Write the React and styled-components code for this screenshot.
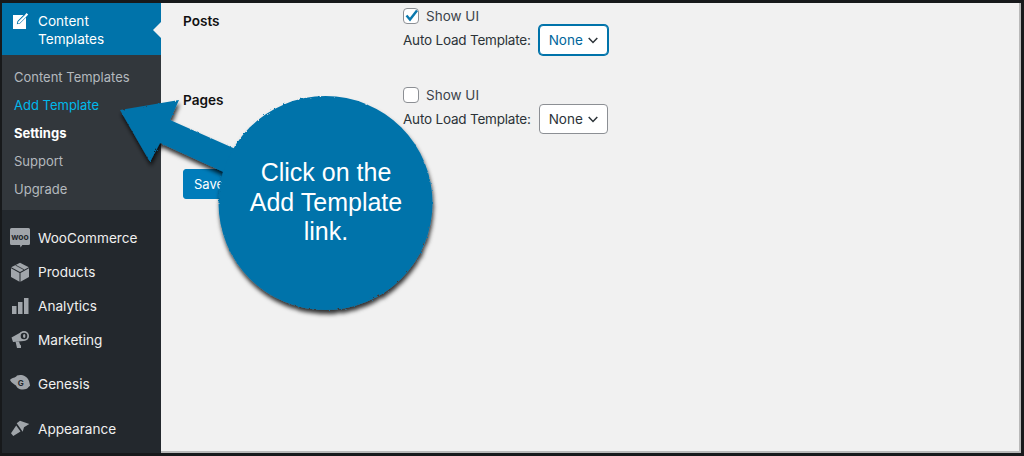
import React from "react";
import styled, { createGlobalStyle } from "styled-components";

const GlobalStyle = createGlobalStyle`
  html, body { margin: 0; padding: 0; background: #f1f1f1; }
  * { box-sizing: border-box; }
`,

  Frame = styled.div`
    position: relative;
    display: flex;
    width: 1024px;
    height: 456px;
    overflow: hidden;
    border: solid #17191b;
    border-width: 3px 3px 3px 2px;
    font-family: Inter, "Liberation Sans", sans-serif;
    font-size: 14px;
    color: #1d2327;
  `,

  Sidebar = styled.nav`
    flex: 0 0 159px;
    background: #23282d;
    display: flex;
    flex-direction: column;
  `,

  ActiveItem = styled.div`
    position: relative;
    display: flex;
    height: 52px;
    padding: 9px 0 0 8px;
    background: #0073aa;
    color: #fff;
    font-size: 13.6px;
    line-height: 18px;
    gap: 8px;

    &::after {
      content: "";
      position: absolute;
      right: 0;
      top: 19px;
      border: 8px solid transparent;
      border-right-color: #f1f1f1;
    }
  `,

  SubMenu = styled.ul`
    list-style: none;
    margin: 0;
    padding: 8px 0 7px 12px;
    background: #32373c;
  `,

  SubItem = styled.li`
    height: 28px;
    line-height: 28px;
    font-size: 13px;
    font-weight: ${p => (p.$current ? 700 : 400)};
    color: ${p => (p.$current ? "#fff" : p.$hover ? "#00b9eb" : "#b4b9be")};
  `,

  MenuList = styled.div`
    display: flex;
    flex-direction: column;
    padding-top: 11px;
  `,

  MenuItem = styled.div`
    display: flex;
    align-items: center;
    height: 34px;
    margin-top: ${p => p.$gap || 0}px;
    padding-left: 8px;
    gap: 8px;
    font-size: 13.6px;
    color: #f0f0f0;
  `,

  IconBox = styled.svg`
    flex: 0 0 20px;
    width: 20px;
    height: 20px;
    overflow: visible;
    fill: ${p => p.$fill || "#a0a5aa"};
  `,

  Main = styled.main`
    flex: 1;
    padding: 5px 0 0 22px;
    background: #f1f1f1;
    box-shadow: inset -2px -2px 0 #b9b9b9;
  `,

  Row = styled.section`
    display: grid;
    grid-template-columns: 220px 1fr;
    height: 47px;
    margin-bottom: 32px;
  `,

  RowLabel = styled.div`
    padding-top: 4px;
    line-height: 18px;
    font-size: 13.6px;
    font-weight: 600;
    color: #111;
  `,

  Field = styled.div`
    display: flex;
    flex-direction: column;
    gap: 1px;
    font-size: 13.5px;
  `,

  CheckLine = styled.label`
    display: flex;
    align-items: center;
    height: 16px;
    gap: 7px;
    color: #3c434a;
  `,

  Box = styled.span`
    position: relative;
    width: 16px;
    height: 16px;
    border: 1px solid #8c8f94;
    border-radius: 4px;
    background: #fff;
  `,

  Tick = styled.svg`
    position: absolute;
    left: -1px;
    top: -2px;
    width: 17px;
    height: 17px;
    fill: none;
    stroke: #0a78ad;
    stroke-width: 2.4;
  `,

  SelectLine = styled.div`
    display: flex;
    align-items: center;
    gap: 8px;
    letter-spacing: -0.2px;
    color: #2c3338;
  `,

  FakeSelect = styled.div`
    display: flex;
    align-items: center;
    justify-content: space-between;
    width: 69px;
    height: 30px;
    padding: 0 9px;
    background: #fff;
    border: 1px solid ${p => (p.$focus ? "#0073aa" : "#8c8f94")};
    border-radius: 4px;
    box-shadow: ${p => (p.$focus ? "0 0 0 1px #0073aa" : "none")};
    letter-spacing: 0;
    color: ${p => (p.$focus ? "#00669b" : "#2c3338")};
  `,

  Chevron = styled.svg`
    width: 10px;
    height: 7px;
    fill: none;
    stroke: #2c3338;
    stroke-width: 1.5;
  `,

  SaveButton = styled.button`
    display: block;
    width: 100px;
    height: 30px;
    margin-top: 35px;
    padding: 0 10px;
    border: 1px solid #007cba;
    border-radius: 3px;
    background: #007cba;
    color: #fff;
    text-align: left;
    font: 13px Inter, "Liberation Sans", sans-serif;
  `,

  CalloutArt = styled.svg`
    position: absolute;
    left: -2px;
    top: -3px;
    width: 1024px;
    height: 456px;
    pointer-events: none;
  `,

  CalloutText = styled.div`
    position: absolute;
    left: 216px;
    top: 155px;
    width: 216px;
    font-family: "Liberation Sans", Arial, sans-serif;
    font-size: 25px;
    line-height: 29.5px;
    text-align: center;
    color: #fff;
  `;

const PencilIcon = () => (
  <IconBox viewBox="0 0 20 20" $fill="#fff">
    <path d="M3 3h10.500L7.500 9 6.800 12.200 10 11.500 16 5.500V17H3z" />
    <path d="M14.500 3.500 16.500 1 18.200 2.500 15.500 5.500 9.800 11 7.800 11.500 8.300 9.500z" />
  </IconBox>
);

const WooIcon = () => (
  <IconBox viewBox="0 0 20 20">
    <path d="M1.500 0h17A1.500 1.500 0 0 1 20 1.500v14a1.500 1.500 0 0 1-1.500 1.500h-6.200L10.600 19.500 10 17H1.500A1.500 1.500 0 0 1 0 15.500v-14A1.500 1.500 0 0 1 1.500 0z" />
    <text x="10" y="11.500" textAnchor="middle" fontSize="8.500" fontWeight="700" fill="#23282d" fontFamily="Inter, sans-serif">woo</text>
  </IconBox>
);

const BoxIcon = () => (
  <IconBox viewBox="0 0 20 20">
    <path d="M10 .8 18.800 5.300 10 10 1.200 5.300z" />
    <path d="M1 6.300 9.500 11V19.700L1 15zM19 6.300V15L10.500 19.700V11z" />
    <path d="M5.500 3.100 14 7.700" stroke="#23282d" strokeWidth=".8" fill="none" />
  </IconBox>
);

const BarsIcon = () => (
  <IconBox viewBox="0 0 20 20">
    <path d="M2 10h4.500v8H2zM8 6h4.500v12H8zM14 2h4.500v16H14z" />
  </IconBox>
);

const MegaphoneIcon = () => (
  <IconBox viewBox="0 0 20 20">
    <path d="M1.500 7.500 11 2.200 14 11 3 12z" />
    <path d="M5.500 11.500h3.500l1 3 1 1v2.500H7z" />
    <circle cx="14" cy="6" r="5" />
    <circle cx="14" cy="6" r="3.300" fill="#23282d" />
    <ellipse cx="14.200" cy="6" rx="1.200" ry="2" />
  </IconBox>
);

const GenesisIcon = () => (
  <IconBox viewBox="0 0 20 20">
    <g transform="translate(0 -1.500)">
      <path d="M0 7.500C2.500 4.500 5 6 7 3c4-1.500 10 0 12 5.500 1 3.500 1 4.500 1 5-2 .5-1.500 3.500-7 3.500-4.500 0-6-2-7-4C4 11.500 1.500 10.500 0 7.500z" />
      <circle cx="11" cy="10.500" r="5" fill="#a0a5aa" />
    </g>
    <text x="10.800" y="12" textAnchor="middle" fontSize="8" fontWeight="700" fill="#23282d" fontFamily="Inter, sans-serif">G</text>
  </IconBox>
);

const BrushIcon = () => (
  <IconBox viewBox="0 0 20 20">
    <path d="M6.700 4.300 10 1.700 19.300 5 14 8.300 12.700 12.700z" />
    <path d="M6.200 6.500 10.500 12.500 3.300 17 1 14.300z" />
  </IconBox>
);

const TemplateRow = ({ label, checked, focus }) => (
  <Row>
    <RowLabel>{label}</RowLabel>
    <Field>
      <CheckLine>
        <Box>
          {checked && (
            <Tick viewBox="0 0 17 17">
              <path d="M3.500 8.500 7 12.500 14 3.500" />
            </Tick>
          )}
        </Box>
        Show UI
      </CheckLine>
      <SelectLine>
        Auto Load Template:
        <FakeSelect $focus={focus}>
          None
          <Chevron viewBox="0 0 10 7"><path d="M.7 1 5 5.500 9.300 1" /></Chevron>
        </FakeSelect>
      </SelectLine>
    </Field>
  </Row>
);

const subItems = ["Content Templates", "Add Template", "Settings", "Support", "Upgrade"];

const menuItems = [
  { name: "WooCommerce", Icon: WooIcon },
  { name: "Products", Icon: BoxIcon },
  { name: "Analytics", Icon: BarsIcon },
  { name: "Marketing", Icon: MegaphoneIcon },
  { name: "Genesis", Icon: GenesisIcon, gap: 10 },
  { name: "Appearance", Icon: BrushIcon, gap: 11 },
];

const App = () => (
  <>
    <GlobalStyle />
    <Frame>
      <Sidebar>
        <ActiveItem>
          <PencilIcon />
          <span>Content<br />Templates</span>
        </ActiveItem>
        <SubMenu>
          {subItems.map(item => (
            <SubItem key={item} $current={item === "Settings"} $hover={item === "Add Template"}>
              {item}
            </SubItem>
          ))}
        </SubMenu>
        <MenuList>
          {menuItems.map(({ name, Icon, gap }) => (
            <MenuItem key={name} $gap={gap}>
              <Icon />
              {name}
            </MenuItem>
          ))}
        </MenuList>
      </Sidebar>
      <Main>
        <TemplateRow label="Posts" checked focus />
        <TemplateRow label="Pages" />
        <SaveButton>Save</SaveButton>
      </Main>
      <CalloutArt viewBox="0 0 1024 456">
        <defs>
          <filter id="rough" x="-10%" y="-10%" width="125%" height="125%">
            <feTurbulence type="fractalNoise" baseFrequency="0.35" numOctaves="2" seed="4" result="n" />
            <feDisplacementMap in="SourceGraphic" in2="n" scale="2.500" result="d" />
            <feGaussianBlur in="d" stdDeviation="2.200" result="b" />
            <feOffset in="b" dx="1" dy="4" result="o" />
            <feFlood floodColor="#000" floodOpacity="0.8" />
            <feComposite in2="o" operator="in" result="s" />
            <feMerge>
              <feMergeNode in="s" />
              <feMergeNode in="d" />
            </feMerge>
          </filter>
        </defs>
        <g filter="url(#rough)" fill="#0073aa">
          <path d="M120 110 179 100 170 120 240 151 230 175 160 143 150 162z" />
          <circle cx="325.500" cy="203" r="107" />
        </g>
      </CalloutArt>
      <CalloutText>Click on the<br />Add Template<br />link.</CalloutText>
    </Frame>
  </>
);

export default App;
